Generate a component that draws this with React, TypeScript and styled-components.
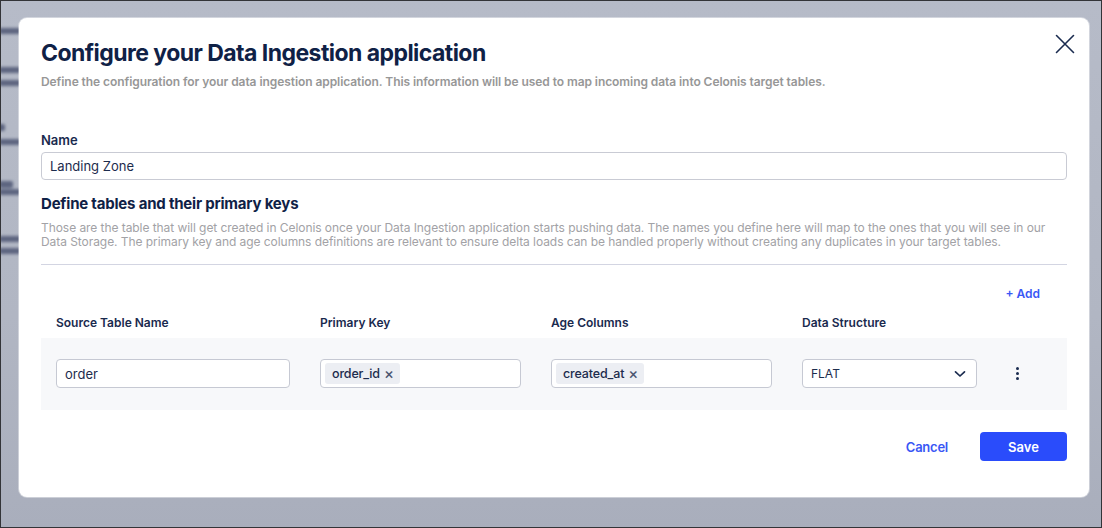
import styled, { createGlobalStyle } from "styled-components";

const GlobalStyle = createGlobalStyle`
  body {
    margin: 0;
    font-family: Inter, "Noto Sans", sans-serif;
    color: #13244a;
  }
  * {
    box-sizing: border-box;
  }
`;

const blurredRows = [
  { top: 27, left: -2, width: 24, height: 6 },
  { top: 66, left: -2, width: 24, height: 6 },
  { top: 79, left: -2, width: 24, height: 6 },
  { top: 123, left: -4, width: 8, height: 7 },
  { top: 138, left: -2, width: 24, height: 6 },
  { top: 180, left: -2, width: 14, height: 7 },
  { top: 188, left: -2, width: 24, height: 6 },
  { top: 235, left: -2, width: 24, height: 6 },
  { top: 247, left: -2, width: 24, height: 6 },
];

const columns = [
  { title: "Source Table Name" },
  { title: "Primary Key" },
  { title: "Age Columns" },
  { title: "Data Structure" },
];

export default function App() {
  return (
    <>
      <GlobalStyle />
      <Screen>
        <Backdrop>
          {blurredRows.map((r, i) => (
            <GhostRow key={i} style={{ top: r.top, left: r.left, width: r.width, height: r.height }} />
          ))}
        </Backdrop>
        <Overlay>
          <Modal>
            <CloseButton aria-label="Close">
              <svg width="20" height="20" viewBox="0 0 20 20" fill="none">
                <path d="M1.5 1.5 L18.5 18.5 M18.5 1.5 L1.5 18.5" stroke="#1a2b4f" strokeWidth="1.6" strokeLinecap="round" />
              </svg>
            </CloseButton>
            <Title>Configure your Data Ingestion application</Title>
            <Subtitle>
              Define the configuration for your data ingestion application. This information will be used to map
              incoming data into Celonis target tables.
            </Subtitle>

            <Label>Name</Label>
            <NameInput>Landing Zone</NameInput>

            <SectionTitle>Define tables and their primary keys</SectionTitle>
            <Paragraph>
              Those are the table that will get created in Celonis once your Data Ingestion application starts pushing
              data. The names you define here will map to the ones that you will see in our Data Storage. The primary key
              and age columns definitions are relevant to ensure delta loads can be handled properly without creating any
              duplicates in your target tables.
            </Paragraph>
            <Divider />

            <AddRow>
              <LinkButton>+ Add</LinkButton>
            </AddRow>

            <HeaderRow>
              {columns.map((c) => (
                <ColumnTitle key={c.title}>{c.title}</ColumnTitle>
              ))}
              <span />
            </HeaderRow>

            <TableRow>
              <Field>order</Field>
              <Field>
                <Chip>
                  order_id <ChipX>×</ChipX>
                </Chip>
              </Field>
              <Field>
                <Chip>
                  created_at <ChipX>×</ChipX>
                </Chip>
              </Field>
              <SelectField>
                FLAT
                <svg width="12" height="8" viewBox="0 0 12 8" fill="none">
                  <path d="M1.5 1.8 L6 6 L10.5 1.8" stroke="#1a2b4f" strokeWidth="1.7" strokeLinecap="round" strokeLinejoin="round" />
                </svg>
              </SelectField>
              <Kebab>
                <Dot />
                <Dot />
                <Dot />
              </Kebab>
            </TableRow>

            <Footer>
              <LinkButton $large>Cancel</LinkButton>
              <PrimaryButton>Save</PrimaryButton>
            </Footer>
          </Modal>
        </Overlay>
      </Screen>
    </>
  );
}

const Screen = styled.div`
  position: relative;
  width: 1102px;
  height: 528px;
  overflow: hidden;
  border: 1px solid #333438;
  background: linear-gradient(180deg, #b6bbc8 0%, #b1b6c3 60%, #a9aebc 100%);
`;

const Backdrop = styled.div`
  position: absolute;
  inset: 0;
  filter: blur(1.6px);
`;

const GhostRow = styled.div`
  position: absolute;
  background: #5d6580;
  border-radius: 2px;
`;

const Overlay = styled.div`
  position: relative;
  display: flex;
  align-items: flex-start;
  padding: 17px 12px 0 18px;
`;

const Modal = styled.div`
  position: relative;
  width: 1070px;
  background: #ffffff;
  border-radius: 8px;
  padding: 20px 22px 36px 22px;
  box-shadow: 0 0 0 1px rgba(255, 255, 255, 0.4);
`;

const CloseButton = styled.button`
  position: absolute;
  top: 15px;
  right: 13px;
  width: 22px;
  height: 22px;
  padding: 1px;
  border: none;
  background: none;
  display: flex;
  align-items: center;
  justify-content: center;
  cursor: pointer;
`;

const Title = styled.h1`
  margin: 0;
  font-size: 23px;
  line-height: 30px;
  font-weight: 700;
  letter-spacing: -0.55px;
  color: #0f2146;
`;

const Subtitle = styled.p`
  margin: 5px 0 0;
  font-size: 12px;
  line-height: 18px;
  font-weight: 600;
  letter-spacing: -0.07px;
  color: #979797;
`;

const Label = styled.div`
  margin-top: 40px;
  font-size: 13px;
  line-height: 18px;
  font-weight: 600;
  color: #1a2a4e;
`;

const NameInput = styled.div`
  margin-top: 3px;
  height: 28px;
  border: 1px solid #c9cbd4;
  border-radius: 4px;
  padding: 0 8px;
  display: flex;
  align-items: center;
  font-size: 13px;
  color: #1d2c4d;
`;

const SectionTitle = styled.h2`
  margin: 14px 0 0;
  font-size: 15px;
  line-height: 20px;
  font-weight: 700;
  letter-spacing: -0.2px;
  color: #0f2146;
`;

const Paragraph = styled.p`
  margin: 7px 0 0;
  font-size: 12px;
  line-height: 14px;
  letter-spacing: -0.06px;
  color: #a2a2a6;
`;

const Divider = styled.hr`
  margin: 15px 0 0;
  border: none;
  border-top: 1px solid #d3d5e2;
`;

const AddRow = styled.div`
  margin-top: 20px;
  display: flex;
  justify-content: flex-end;
  padding-right: 27px;
`;

const LinkButton = styled.button<{ $large?: boolean }>`
  border: none;
  background: none;
  padding: 0;
  font-family: inherit;
  font-size: ${(p) => (p.$large ? "13px" : "12px")};
  letter-spacing: ${(p) => (p.$large ? "-0.25px" : "0")};
  line-height: 18px;
  font-weight: 600;
  color: #3a57f5;
  cursor: pointer;
`;

const gridColumns = "234px 201px 221px 175px 20px";

const HeaderRow = styled.div`
  margin-top: 11px;
  display: grid;
  grid-template-columns: ${gridColumns};
  column-gap: 30px;
  padding: 0 15px 6px;
`;

const ColumnTitle = styled.div`
  font-size: 12px;
  line-height: 18px;
  font-weight: 600;
  color: #1a2a4e;
`;

const TableRow = styled.div`
  display: grid;
  grid-template-columns: ${gridColumns};
  column-gap: 30px;
  align-items: center;
  padding: 21px 15px 22px;
  background: #f7f8fa;
`;

const Field = styled.div`
  height: 29px;
  background: #ffffff;
  border: 1px solid #c6c9d3;
  border-radius: 4px;
  padding: 0 4px 0 8px;
  display: flex;
  align-items: center;
  font-size: 13px;
  color: #1d2c4d;
`;

const SelectField = styled(Field)`
  justify-content: space-between;
  padding: 0 10px 0 8px;
  font-size: 12px;
`;

const Chip = styled.span`
  margin-left: -4px;
  height: 21px;
  padding: 0 6px 0 7px;
  display: inline-flex;
  align-items: center;
  gap: 4px;
  background: #eceef3;
  border-radius: 3px;
  font-size: 12.5px;
  font-weight: 500;
  letter-spacing: -0.15px;
  color: #1d2c4d;
`;

const ChipX = styled.span`
  font-size: 15px;
  line-height: 1;
  color: #4a5570;
`;

const Kebab = styled.div`
  display: flex;
  flex-direction: column;
  align-items: center;
  gap: 2px;
`;

const Dot = styled.span`
  width: 3px;
  height: 3px;
  border-radius: 50%;
  background: #1a2b4f;
`;

const Footer = styled.div`
  margin-top: 22px;
  display: flex;
  justify-content: flex-end;
  align-items: center;
  gap: 32px;
`;

const PrimaryButton = styled.button`
  width: 87px;
  height: 29px;
  border: none;
  border-radius: 4px;
  background: #2a4cfb;
  color: #ffffff;
  font-family: inherit;
  font-size: 13px;
  font-weight: 600;
  cursor: pointer;
`;
